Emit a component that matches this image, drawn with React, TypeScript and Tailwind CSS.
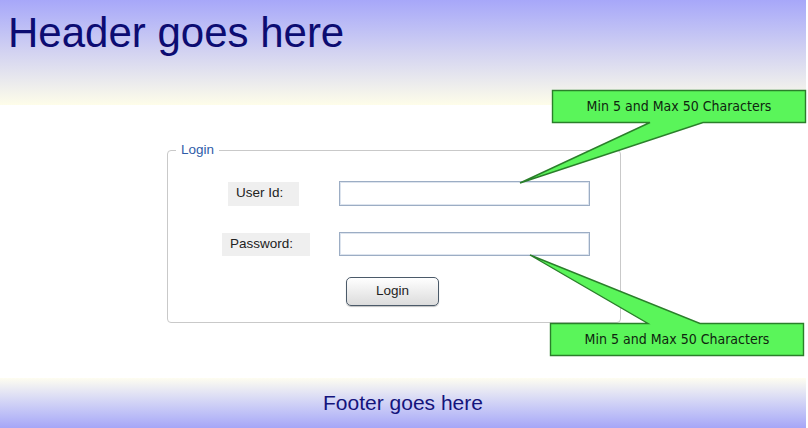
import React from "react";

const calloutText = "Min 5 and Max 50 Characters";

function Callouts() {
  return (
    <>
      <svg
        className="absolute left-0 top-0 pointer-events-none"
        width="808"
        height="428"
        viewBox="0 0 808 428"
      >
        <polygon
          points="552.5,90.5 805.5,90.5 805.5,122.5 703,122.5 520,183 650,122.5 552.5,122.5"
          fill="#5af55a"
          stroke="#2a7f2a"
          strokeWidth="1.4"
          strokeLinejoin="miter"
        />
        <polygon
          points="550.5,323.5 648,323.5 530,255 700,323.5 803.5,323.5 803.5,355.5 550.5,355.5"
          fill="#5af55a"
          stroke="#2a7f2a"
          strokeWidth="1.4"
          strokeLinejoin="miter"
        />
      </svg>
      <div
        className="absolute left-[553px] top-[91px] w-[252px] h-[31px] flex items-center justify-center text-[14px] text-[#0f260f]"
        style={{ fontFamily: '"DejaVu Sans Condensed", "DejaVu Sans", sans-serif' }}
      >
        {calloutText}
      </div>
      <div
        className="absolute left-[551px] top-[324px] w-[252px] h-[31px] flex items-center justify-center text-[14px] text-[#0f260f]"
        style={{ fontFamily: '"DejaVu Sans Condensed", "DejaVu Sans", sans-serif' }}
      >
        {calloutText}
      </div>
    </>
  );
}

export default function App() {
  return (
    <div className="relative w-[808px] h-[428px] bg-white flex flex-col overflow-hidden font-['Liberation_Sans',Arial,sans-serif]">
      <header className="w-[806px] h-[105px] shrink-0 bg-gradient-to-b from-[#a7a7f9] via-[#d3d3f1] to-[#fefde9] pl-[8px] pt-[12px]">
        <h1 className="text-[42px] leading-[42px] text-[#0c0c72] font-normal">Header goes here</h1>
      </header>

      <main className="flex-1">
        <fieldset className="ml-[167px] mt-[37px] w-[454px] border border-[#c9c9c9] rounded-[4px] pb-[16px]">
          <legend className="ml-[8px] px-[5px] text-[13.5px] leading-[16px] text-[#2f5ca8]">Login</legend>
          <div className="pt-[23px] flex flex-col">
            <div className="flex items-center h-[25px]">
              <div className="w-[171px] flex">
                <span className="ml-[60px] w-[71px] h-[24px] bg-[#efefef] pl-[8px] flex items-center text-[13.5px] text-[#222222]">
                  User Id:
                </span>
              </div>
              <input
                type="text"
                className="w-[251px] h-[25px] border border-[#9cadc4] bg-white shadow-[inset_0_0_0_1px_#dde4ee] outline-none"
              />
            </div>
            <div className="flex items-center h-[24px] mt-[26px]">
              <div className="w-[171px] flex">
                <span className="ml-[54px] w-[88px] h-[23px] bg-[#efefef] pl-[8px] flex items-center text-[13.5px] text-[#222222]">
                  Password:
                </span>
              </div>
              <input
                type="password"
                className="w-[251px] h-[24px] border border-[#9cadc4] bg-white shadow-[inset_0_0_0_1px_#dde4ee] outline-none"
              />
            </div>
            <div className="mt-[21px] pl-[178px]">
              <button className="w-[93px] h-[29px] rounded-[5px] border border-[#4b5a69] bg-gradient-to-b from-[#ffffff] to-[#dcdcdc] text-[13.5px] text-[#1e1e1e] shadow-[0_1px_1px_rgba(0,0,0,0.25)]">
                Login
              </button>
            </div>
          </div>
        </fieldset>
      </main>

      <footer className="w-[806px] h-[50px] shrink-0 bg-gradient-to-b from-[#fefdf0] to-[#a6a6f7] flex justify-center pt-[13px]">
        <span className="text-[21px] leading-[24px] text-[#14147c]">Footer goes here</span>
      </footer>

      <Callouts />
    </div>
  );
}
